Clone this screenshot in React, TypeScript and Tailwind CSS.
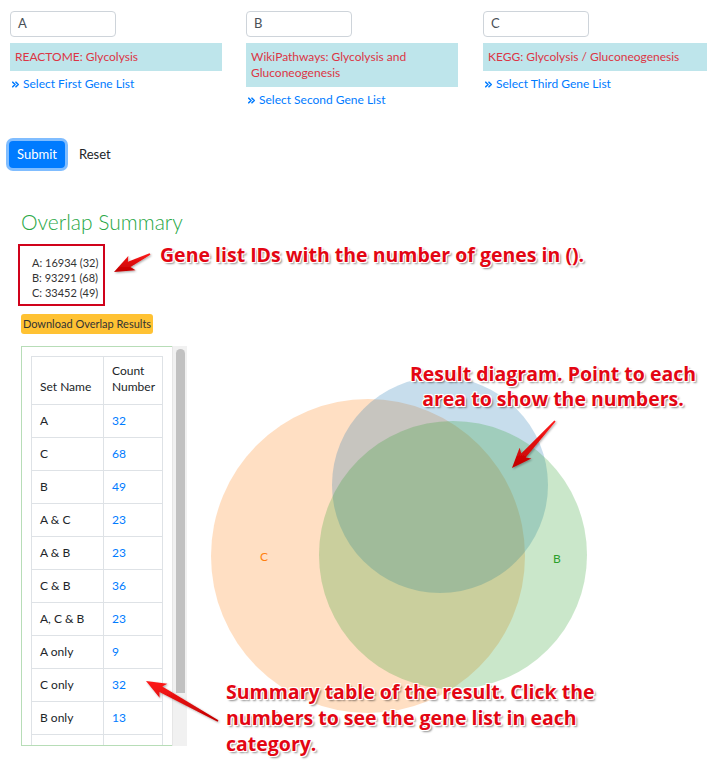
import React from "react";
import { ChevronsRight } from "lucide-react";

type Pt = [number, number];

function arrowPoints(tail: Pt, tip: Pt): string {
  const dx = tip[0] - tail[0];
  const dy = tip[1] - tail[1];
  const L = Math.sqrt(dx * dx + dy * dy);
  const ux = dx / L;
  const uy = dy / L;
  const nx = -uy;
  const ny = ux;
  const h = Math.min(17, L * 0.5);
  const bx = tip[0] - ux * h;
  const by = tip[1] - uy * h;
  const w = 8;
  const barb = 3;
  const pts: Pt[] = [
    [tail[0] + nx * 0.8, tail[1] + ny * 0.8],
    [bx + nx * 3, by + ny * 3],
    [bx - ux * barb + nx * w, by - uy * barb + ny * w],
    [tip[0], tip[1]],
    [bx - ux * barb - nx * w, by - uy * barb - ny * w],
    [bx - nx * 3, by - ny * 3],
    [tail[0] - nx * 0.8, tail[1] - ny * 0.8],
  ];
  return pts.map((p) => `${p[0].toFixed(1)},${p[1].toFixed(1)}`).join(" ");
}

const rows: [string, string][] = [
  ["A", "32"],
  ["C", "68"],
  ["B", "49"],
  ["A & C", "23"],
  ["A & B", "23"],
  ["C & B", "36"],
  ["A, C & B", "23"],
  ["A only", "9"],
  ["C only", "32"],
  ["B only", "13"],
  ["", ""],
];

function GeneCol({
  letter,
  title,
  link,
  boxW,
}: {
  letter: string;
  title: React.ReactNode;
  link: string;
  boxW: string;
}) {
  return (
    <div className="flex flex-col">
      <div className="w-[106px] h-[26px] border border-[#ced4da] rounded-[4px] flex items-center px-[7px] text-[13px] text-[#495057]">
        {letter}
      </div>
      <div
        className={`${boxW} mt-[6px] bg-[#bee5eb] text-[#dc3545] text-[12px] leading-[16px] py-[6px] px-[5px]`}
      >
        {title}
      </div>
      <div className="mt-[4px] h-[18px] flex items-center text-[12px] text-[#007bff]">
        <ChevronsRight size={11} strokeWidth={3.5} className="mr-[2px]" />
        <span>{link}</span>
      </div>
    </div>
  );
}

const annot =
  "text-[#e30613] font-bold [font-family:'Open_Sans',sans-serif] [text-shadow:-1px_-1px_0_#fff,1px_-1px_0_#fff,-1px_1px_0_#fff,1px_1px_0_#fff,0_-1px_0_#fff,0_1px_0_#fff,2px_2px_2px_rgba(0,0,0,0.45)]";

export default function App() {
  return (
    <div className="relative w-[707px] h-[764px] overflow-hidden bg-white text-[#212529] [font-family:Lato,'Open_Sans',sans-serif]">
      <div className="pt-[11px] pl-[10px] grid grid-cols-[236px_237px_224px]">
        <GeneCol letter="A" title="REACTOME: Glycolysis" link="Select First Gene List" boxW="w-[212px]" />
        <GeneCol
          letter="B"
          title={
            <>
              WikiPathways: Glycolysis and
              <br />
              Gluconeogenesis
            </>
          }
          link="Select Second Gene List"
          boxW="w-[212px]"
        />
        <GeneCol
          letter="C"
          title="KEGG: Glycolysis / Gluconeogenesis"
          link="Select Third Gene List"
          boxW="w-[224px]"
        />
      </div>

      <div className="mt-[32px] pl-[9px] flex items-center">
        <div className="h-[27px] w-[56px] rounded-[4px] bg-[#007bff] text-white text-[13px] flex items-center justify-center ring-[3px] ring-[#80bdff]">
          Submit
        </div>
        <div className="ml-[14px] text-[13px] text-[#212529]">Reset</div>
      </div>

      <div className="pl-[21px] mt-[41px] text-[21px] leading-[26px] text-[#28a745] font-light">
        Overlap Summary
      </div>

      <div className="ml-[18px] mt-[9px] w-[87px] h-[62px] border-2 border-[#d0021b] pl-[12px] pt-[9px] text-[11px] leading-[15px] text-[#333] whitespace-nowrap">
        <div>A: 16934 (32)</div>
        <div>B: 93291 (68)</div>
        <div>C: 33452 (49)</div>
      </div>

      <div className="ml-[21px] mt-[8px] w-[132px] h-[20px] rounded-[3px] bg-[#ffc233] text-[11px] text-[#333] flex items-center justify-center whitespace-nowrap">
        Download Overlap Results
      </div>

      <div className="mt-[12px] ml-[21px] flex">
        <div className="w-[166px] h-[400px] flex">
          <div className="flex-1 border-l border-t border-b border-[#b7ddb7] pl-[9px] pt-[9px] overflow-hidden">
            <table className="w-[132px] border-collapse text-[12px]">
              <tbody>
                <tr className="h-[48px]">
                  <td className="w-[72px] border border-[#dee2e6] pl-[8px] align-bottom pb-[9px] leading-[16px]">
                    Set Name
                  </td>
                  <td className="border border-[#dee2e6] pl-[8px] align-bottom pb-[9px] leading-[16px]">
                    Count
                    <br />
                    Number
                  </td>
                </tr>
                {rows.map(([n, c], i) => (
                  <tr key={i} className="h-[33px]">
                    <td className="border border-[#dee2e6] pl-[8px]">{n}</td>
                    <td className="border border-[#dee2e6] pl-[8px] text-[#007bff]">{c}</td>
                  </tr>
                ))}
              </tbody>
            </table>
          </div>
          <div className="w-[15px] bg-[#f1f1f1] border-l border-[#e6e6e6] flex justify-center">
            <div className="w-[9px] h-[344px] mt-[3px] bg-[#c1c1c1] rounded-t-[5px]" />
          </div>
        </div>

        <svg width="520" height="418" viewBox="0 0 520 418" className="block">
          <circle cx="181" cy="210" r="157" fill="#ff7f0e" fillOpacity="0.25" />
          <circle cx="253" cy="139" r="108" fill="#1f77b4" fillOpacity="0.25" />
          <circle cx="266" cy="209" r="134" fill="#2ca02c" fillOpacity="0.25" />
          <text x="77" y="215" fontSize="12" fill="#ff7f0e" textAnchor="middle" fontFamily="Lato, sans-serif">
            C
          </text>
          <text x="370" y="217" fontSize="12" fill="#2ca02c" textAnchor="middle" fontFamily="Lato, sans-serif">
            B
          </text>
        </svg>
      </div>

      {/* Annotations */}
      <div className={`absolute left-[160px] top-[242px] text-[19.5px] leading-[26px] whitespace-nowrap ${annot}`}>
        Gene list IDs with the number of genes in ().
      </div>
      <div className={`absolute left-[400px] w-[306px] top-[361px] text-[19.5px] leading-[25px] text-center whitespace-nowrap ${annot}`}>
        Result diagram. Point to each
        <br />
        area to show the numbers.
      </div>
      <div className={`absolute left-[226px] top-[679px] text-[19.5px] leading-[26px] whitespace-nowrap ${annot}`}>
        Summary table of the result. Click the
        <br />
        numbers to see the gene list in each
        <br />
        category.
      </div>

      <svg className="absolute left-0 top-0 pointer-events-none" width="707" height="764">
        <defs>
          <linearGradient id="ag" x1="0" y1="0" x2="0" y2="1">
            <stop offset="0" stopColor="#ff1a1a" />
            <stop offset="1" stopColor="#c00000" />
          </linearGradient>
          <filter id="as" x="-20%" y="-20%" width="140%" height="140%">
            <feDropShadow dx="1" dy="1" stdDeviation="0.8" floodColor="#000" floodOpacity="0.35" />
          </filter>
        </defs>
        <polygon points={arrowPoints([150, 254], [114, 272])} fill="url(#ag)" filter="url(#as)" />
        <polygon points={arrowPoints([555, 421], [512, 468])} fill="url(#ag)" filter="url(#as)" />
        <polygon points={arrowPoints([218, 721], [146, 681])} fill="url(#ag)" filter="url(#as)" />
      </svg>
    </div>
  );
}
